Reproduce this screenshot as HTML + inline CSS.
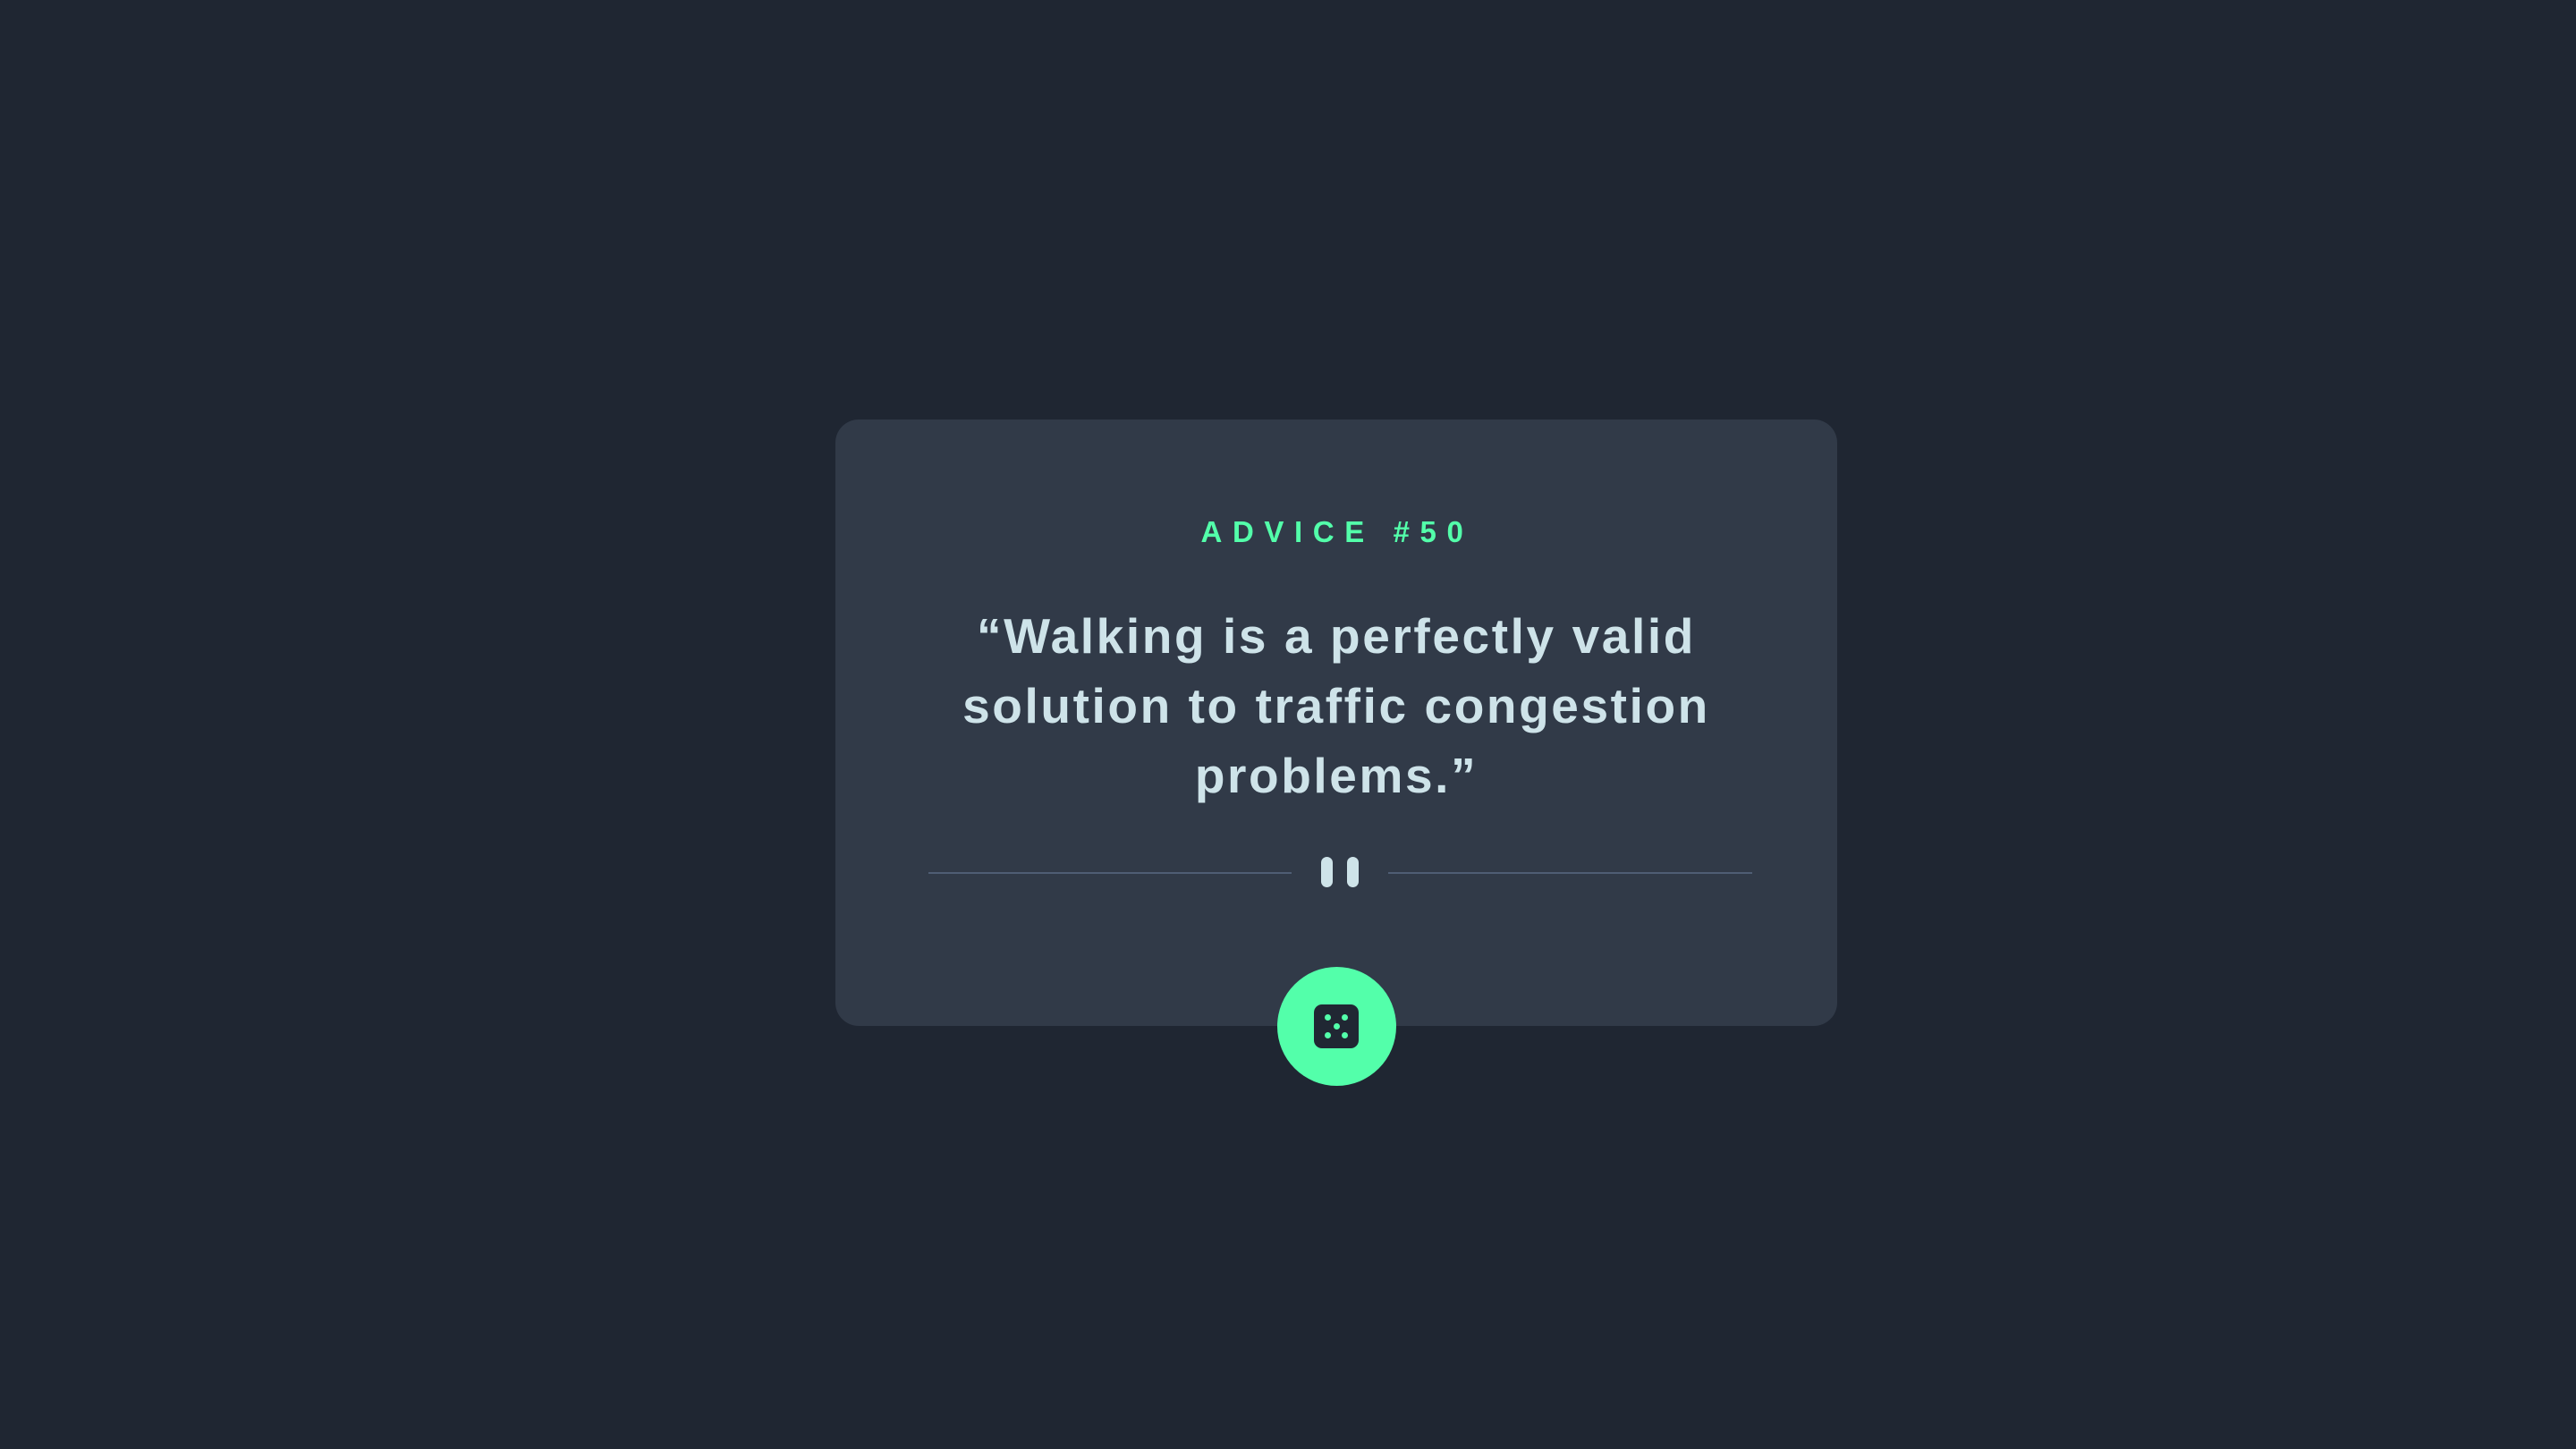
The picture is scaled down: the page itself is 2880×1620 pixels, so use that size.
<!DOCTYPE html>
<html><head><meta charset="utf-8"><style>
html,body{margin:0;padding:0;width:2880px;height:1620px;background:#1f2632;overflow:hidden}
.card{position:absolute;left:934px;top:469px;width:1120px;height:678px;background:#313a48;border-radius:26px}
.h{position:absolute;left:0;width:1120px;top:575px;text-align:center;font:bold 33px "Liberation Sans",sans-serif;color:#53ffaa;letter-spacing:11.6px;text-indent:2px;line-height:40px}
.q{position:absolute;left:-100px;width:1320px;top:672px;text-align:center;font:bold 55px "Liberation Sans",sans-serif;color:#cee3e9;letter-spacing:2.6px;line-height:78px}
.ln{position:absolute;top:975px;height:2px;background:#4f5d74}
.bar{position:absolute;top:958px;width:13px;height:34px;border-radius:7px;background:#cee3e9}
.btn{position:absolute;left:1428px;top:1081px;width:133px;height:133px;border-radius:50%;background:#53ffaa}
.die{position:absolute;left:1469px;top:1123px;width:50px;height:49px;border-radius:9px;background:#202733}
.d{position:absolute;width:7px;height:7px;border-radius:50%;background:#53ffaa}
</style></head><body>
<div class="card"></div>
<div style="position:absolute;left:934px;top:0;width:1120px">
<div class="h">ADVICE #50</div>
<div class="q">“Walking is a perfectly valid<br>solution to traffic congestion<br>problems.”</div>
</div>
<div class="ln" style="left:1038px;width:406px"></div>
<div class="ln" style="left:1552px;width:407px"></div>
<div class="bar" style="left:1477px"></div>
<div class="bar" style="left:1506px"></div>
<div class="btn"></div>
<div class="die"></div>
<div class="d" style="left:1481px;top:1134px"></div>
<div class="d" style="left:1500px;top:1134px"></div>
<div class="d" style="left:1490.5px;top:1144px"></div>
<div class="d" style="left:1481px;top:1154px"></div>
<div class="d" style="left:1500px;top:1154px"></div>
</body></html>
